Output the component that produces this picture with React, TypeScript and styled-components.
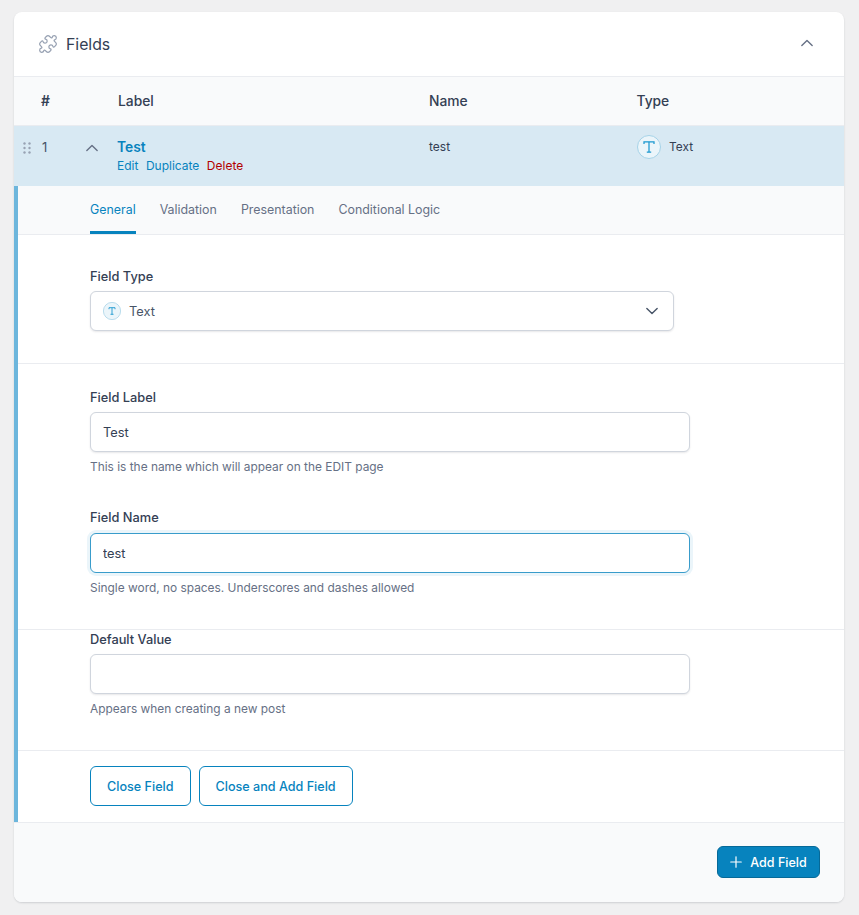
import React from "react";
import styled, { createGlobalStyle } from "styled-components";
import { Puzzle, Plus } from "lucide-react";

const Global = createGlobalStyle`
  html, body { margin: 0; padding: 0; background: #f0f0f1; }
  body { font-family: Inter, "Liberation Sans", sans-serif; color: #344054; -webkit-font-smoothing: antialiased; }
  * { box-sizing: border-box; }
`;

const Page = styled.div`
  width: 859px;
  height: 915px;
  padding: 12px 15px 13px 14px;
`;

const Card = styled.section`
  background: #fff;
  border-radius: 8px;
  box-shadow: 0 1px 2px rgba(16, 24, 40, 0.15);
  overflow: hidden;
  height: 890px;
  display: flex;
  flex-direction: column;
`;

const CardHeader = styled.header`
  height: 65px;
  flex: none;
  display: flex;
  align-items: center;
  padding: 0 31px 3px 24px;
  border-bottom: 1px solid #eaecf0;
`;

const CardTitle = styled.h2`
  margin: 4px 0 0 8px;
  flex: 1;
  font-size: 15.8px;
  line-height: 24px;
  font-weight: 400;
  color: #344054;
`;

const TitleIcon = styled(Puzzle)`
  color: #98a2b3;
  display: block;
  margin-top: 2px;
`;

const Chevron = styled.svg`
  width: 12px;
  height: 8px;
  fill: none;
  stroke: #667085;
  stroke-width: 1.6;
  stroke-linecap: round;
  stroke-linejoin: round;
  display: block;
`;

const TableHead = styled.div`
  height: 49px;
  flex: none;
  display: grid;
  grid-template-columns: 104px 311px 207.5px 1fr;
  align-items: center;
  padding-bottom: 1px;
  background: #f9fafb;
  border-bottom: 1px solid #eaecf0;
  font-size: 13.8px;
  font-weight: 500;
  color: #344054;
`;

const HashCell = styled.span`
  padding-left: 27px;
  font-weight: 600;
`;

const Row = styled.div`
  height: 60px;
  flex: none;
  display: grid;
  grid-template-columns: 103px 312px 208px 1fr;
  background: #d8e9f3;
  font-size: 12.5px;
  color: #344054;
`;

const RowLead = styled.div`
  display: flex;
  align-items: flex-start;
  padding: 15px 0 0 9px;
`;

const Handle = styled.svg`
  width: 8px;
  height: 12px;
  margin-top: 1px;
  fill: #98a2b3;
  display: block;
`;

const RowNumber = styled.span`
  margin-left: 11px;
  width: 44px;
  font-size: 13px;
  line-height: 13px;
  color: #475467;
`;

const RowChevron = styled(Chevron)`
  margin-top: 3px;
`;

const LabelCell = styled.div`
  padding-top: 12px;
`;

const RowTitle = styled.div`
  font-size: 13.8px;
  line-height: 18px;
  font-weight: 600;
  color: #0783be;
`;

const RowActions = styled.div`
  display: flex;
  gap: 7.5px;
  margin-top: 2px;
  font-size: 12px;
  line-height: 16px;
`;

const RowAction = styled.a<{ $danger?: boolean }>`
  color: ${(p) => (p.$danger ? "#b30000" : "#0783be")};
`;

const NameCell = styled.div`
  padding-top: 13px;
  line-height: 16px;
  font-size: 12px;
`;

const TypeCell = styled.div`
  display: flex;
  align-items: flex-start;
  gap: 8px;
  padding-top: 9px;
  font-size: 11.9px;
  line-height: 24px;
`;

const TypeText = styled.span`
  line-height: 20px;
  margin-top: 2px;
`;

const TypeBadge = styled.svg<{ $size: number }>`
  width: ${(p) => p.$size}px;
  height: ${(p) => p.$size}px;
  flex: none;
  display: block;
`;

const Panel = styled.div`
  height: 636px;
  flex: none;
  border-left: 4px solid #6db6dc;
  display: flex;
  flex-direction: column;
`;

const Tabs = styled.nav`
  height: 49px;
  flex: none;
  display: flex;
  gap: 24px;
  padding-left: 72px;
  background: #f9fafb;
  border-bottom: 1px solid #eaecf0;
`;

const Tab = styled.a<{ $active?: boolean }>`
  height: 48px;
  font-size: 12.4px;
  line-height: 47px;
  color: ${(p) => (p.$active ? "#0783be" : "#667085")};
  border-bottom: 3px solid ${(p) => (p.$active ? "#0783be" : "transparent")};
`;

const Section = styled.div<{ $h: number; $top: number; $end?: boolean }>`
  height: ${(p) => p.$h}px;
  flex: none;
  padding: ${(p) => p.$top}px 0 0 72px;
  border-bottom: ${(p) => (p.$end ? "0" : "1px solid #eaecf0")};
`;

const FieldLabel = styled.label`
  display: block;
  font-size: 12.8px;
  line-height: 18px;
  font-weight: 500;
  color: #344054;
  margin-bottom: 5px;
`;

const TightLabel = styled(FieldLabel)`
  line-height: 16px;
  margin-bottom: 7px;
`;

const InputBox = styled.input<{ $focus?: boolean }>`
  display: block;
  width: 600px;
  height: 40px;
  padding: 0 12px;
  margin: 0;
  font: 400 12.8px Inter, "Liberation Sans", sans-serif;
  color: #344054;
  background: #fff;
  outline: none;
  border-radius: 6px;
  border: 1px solid ${(p) => (p.$focus ? "#399ccb" : "#d0d5dd")};
  box-shadow: ${(p) =>
    p.$focus ? "0 0 0 3px #ebf5fa" : "0 1px 2px rgba(16, 24, 40, 0.1)"};
`;

const Hint = styled.p`
  margin: 7px 0 0;
  font-size: 11.9px;
  line-height: 16px;
  color: #667085;
`;

const NextField = styled.div`
  margin-top: 35px;
`;

const SelectBox = styled.div`
  width: 584px;
  height: 40px;
  display: flex;
  align-items: center;
  gap: 8px;
  padding: 0 15px 0 12px;
  background: #fff;
  border: 1px solid #d0d5dd;
  border-radius: 6px;
  box-shadow: 0 1px 2px rgba(16, 24, 40, 0.1);
  font-size: 12.8px;
  color: #475467;
`;

const SelectValue = styled.span`
  flex: 1;
`;

const ChevronDown = styled(Chevron)`
  stroke: #475467;
`;

const ButtonRow = styled.div`
  height: 71px;
  flex: none;
  display: flex;
  gap: 8px;
  padding: 15px 0 0 72px;
`;

const OutlineButton = styled.button`
  height: 40px;
  padding: 0 16px;
  margin: 0;
  background: #fff;
  border: 1px solid #0783be;
  border-radius: 6px;
  color: #0783be;
  font: 500 12.6px Inter, "Liberation Sans", sans-serif;
`;

const Footer = styled.footer`
  flex: 1;
  display: flex;
  justify-content: flex-end;
  align-items: flex-start;
  padding: 23px 24px 0 0;
  background: #f9fafb;
  border-top: 1px solid #eaecf0;
`;

const PrimaryButton = styled.button`
  height: 32px;
  width: 103px;
  display: flex;
  align-items: center;
  justify-content: center;
  gap: 5px;
  padding: 0 3px 0 0;
  margin: 0;
  background: #0783be;
  border: 1px solid #066998;
  border-radius: 6px;
  color: #fff;
  font: 500 12.5px Inter, "Liberation Sans", sans-serif;
`;

const Badge = ({ size }: { size: number }) => (
  <TypeBadge $size={size} viewBox="0 0 24 24">
    <circle cx="12" cy="12" r="11.5" fill="#ebf5fa" stroke="#a5d2e7" />
    <path
      d={
        size > 20
          ? "M7 9V6.9h10V9M12 6.9v10.2M9.8 17.2h4.4"
          : "M8 9.6V7.6h8v2M12 7.6v8.8M10 16.4h4"
      }
      fill="none"
      stroke="#1b98d0"
      strokeWidth={size > 20 ? 1.25 : 1.2}
    />
  </TypeBadge>
);

export default function App() {
  return (
    <Page>
      <Global />
      <Card>
        <CardHeader>
          <TitleIcon size={20} strokeWidth={1.5} />
          <CardTitle>Fields</CardTitle>
          <Chevron viewBox="0 0 14 8">
            <path d="M1 7l6-6 6 6" />
          </Chevron>
        </CardHeader>
        <TableHead>
          <HashCell>#</HashCell>
          <span>Label</span>
          <span>Name</span>
          <span>Type</span>
        </TableHead>
        <Row>
          <RowLead>
            <Handle viewBox="0 0 8 12">
              <circle cx="1.5" cy="1.5" r="1.2" />
              <circle cx="6.5" cy="1.5" r="1.2" />
              <circle cx="1.5" cy="6" r="1.2" />
              <circle cx="6.5" cy="6" r="1.2" />
              <circle cx="1.5" cy="10.5" r="1.2" />
              <circle cx="6.5" cy="10.5" r="1.2" />
            </Handle>
            <RowNumber>1</RowNumber>
            <RowChevron viewBox="0 0 14 8">
              <path d="M1 7l6-6 6 6" />
            </RowChevron>
          </RowLead>
          <LabelCell>
            <RowTitle>Test</RowTitle>
            <RowActions>
              <RowAction>Edit</RowAction>
              <RowAction>Duplicate</RowAction>
              <RowAction $danger>Delete</RowAction>
            </RowActions>
          </LabelCell>
          <NameCell>test</NameCell>
          <TypeCell>
            <Badge size={24} />
            <TypeText>Text</TypeText>
          </TypeCell>
        </Row>
        <Panel>
          <Tabs>
            <Tab $active>General</Tab>
            <Tab>Validation</Tab>
            <Tab>Presentation</Tab>
            <Tab>Conditional Logic</Tab>
          </Tabs>
          <Section $h={129} $top={33}>
            <FieldLabel>Field Type</FieldLabel>
            <SelectBox>
              <Badge size={18} />
              <SelectValue>Text</SelectValue>
              <ChevronDown viewBox="0 0 14 8">
                <path d="M1 1l6 6 6-6" />
              </ChevronDown>
            </SelectBox>
          </Section>
          <Section $h={266} $top={25}>
            <FieldLabel>Field Label</FieldLabel>
            <InputBox defaultValue="Test" />
            <Hint>This is the name which will appear on the EDIT page</Hint>
            <NextField>
              <TightLabel>Field Name</TightLabel>
              <InputBox $focus defaultValue="test" />
              <Hint>Single word, no spaces. Underscores and dashes allowed</Hint>
            </NextField>
          </Section>
          <Section $h={121} $top={1}>
            <FieldLabel>Default Value</FieldLabel>
            <InputBox />
            <Hint>Appears when creating a new post</Hint>
          </Section>
          <ButtonRow>
            <OutlineButton>Close Field</OutlineButton>
            <OutlineButton>Close and Add Field</OutlineButton>
          </ButtonRow>
        </Panel>
        <Footer>
          <PrimaryButton>
            <Plus size={18} strokeWidth={1.6} />
            Add Field
          </PrimaryButton>
        </Footer>
      </Card>
    </Page>
  );
}
